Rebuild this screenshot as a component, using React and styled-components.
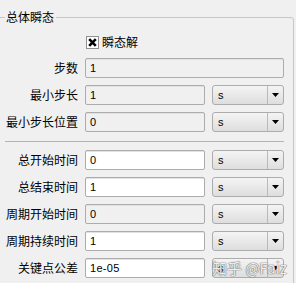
import React from "react";
import styled, { createGlobalStyle } from "styled-components";

const GlobalStyle = createGlobalStyle`
    body {
        margin: 0;
        background: #f0f0f0;
        font-family: "Noto Sans CJK SC", "Liberation Sans", sans-serif;
    }
`;

const Page = styled.div`
    height: 283px;
    overflow: hidden;
`;

const Frame = styled.fieldset`
    position: relative;
    margin: 10px 2px 0 -6px;
    padding: 0 9px 30px 11px;
    border: 1px solid #c6c6c6;
    border-radius: 3px;
    min-inline-size: 0;
`;

const Legend = styled.legend`
    margin-left: -1px;
    padding: 0 2px 0 1px;
    font-size: 12px;
    line-height: 14px;
    color: #000;
`;

const Form = styled.div`
    display: grid;
    grid-template-columns: 72px 120px 72px;
    column-gap: 7px;
    row-gap: 7px;
    padding-top: 9px;
`;

const Label = styled.label`
    font-size: 12px;
    line-height: 20px;
    height: 20px;
    text-align: right;
    white-space: nowrap;
    color: #000;
`;

const CheckRow = styled.div`
    grid-column: 2 / 4;
    height: 18px;
    display: flex;
    align-items: center;
    gap: 3px;
    margin-left: 1px;
`;

const CheckBox = styled.span`
    width: 11px;
    height: 11px;
    border: 1px solid #8f8f8f;
    background: #fff;
    display: flex;
    align-items: center;
    justify-content: center;
`;

const CheckText = styled.span`
    font-size: 12px;
    line-height: 14px;
`;

const Field = styled.div`
    grid-column: ${(p) => (p.$wide ? "2 / 4" : "2 / 3")};
    height: 20px;
    box-sizing: border-box;
    border: 1px solid #acacac;
    border-radius: 2px;
    background: ${(p) => (p.$readonly ? "#f0f0f0" : "#ffffff")};
    box-shadow: inset 0 1px 0 #e2e2e2;
    padding-left: 4px;
    font-family: "Liberation Sans", Arial, sans-serif;
    font-size: 11px;
    letter-spacing: 0.3px;
    line-height: 18px;
    color: #000;
`;

const Combo = styled.div`
    height: 20px;
    box-sizing: border-box;
    border: 1px solid #acacac;
    border-radius: 3px;
    background: linear-gradient(#f4f4f4, #dedede);
    display: flex;
`;

const ComboText = styled.span`
    flex: 1;
    padding-left: 5px;
    font-family: "Liberation Sans", Arial, sans-serif;
    font-size: 11px;
    line-height: 19px;
    color: #000;
`;

const ComboArrow = styled.span`
    width: 15px;
    border-left: 1px solid #b9b9b9;
    display: flex;
    align-items: center;
    justify-content: center;
`;

const Separator = styled.div`
    grid-column: 1 / 4;
    height: 1px;
    margin: 2px 0 1px -1px;
    background: #b4b4b4;
`;

const Watermark = styled.div`
    position: absolute;
    top: 234px;
    right: 6px;
    font-size: 15px;
    line-height: 20px;
    color: rgba(255, 255, 255, 0.9);
    text-shadow: 0 0 1px #777, 0 0 1px #777, 0 0 1px #777;
    white-space: nowrap;
`;

const Arrow = () => (
    <svg width="7" height="4" viewBox="0 0 7 4">
        <path d="M0 0 H7 L3.5 4 Z" fill="#000" />
    </svg>
);

const Unit = () => (
    <Combo>
        <ComboText>s</ComboText>
        <ComboArrow>
            <Arrow />
        </ComboArrow>
    </Combo>
);

const topRows = [
    { label: "最小步长", value: "1", readonly: true },
    { label: "最小步长位置", value: "0", readonly: true },
];

const timeRows = [
    { label: "总开始时间", value: "0" },
    { label: "总结束时间", value: "1" },
    { label: "周期开始时间", value: "0", readonly: true },
    { label: "周期持续时间", value: "1" },
    { label: "关键点公差", value: "1e-05" },
];

const Row = ({ item }) => (
    <>
        <Label>{item.label}</Label>
        <Field $readonly={item.readonly}>{item.value}</Field>
        <Unit />
    </>
);

export default function App() {
    return (
        <Page>
            <GlobalStyle />
            <Frame>
                <Legend>总体瞬态</Legend>
                <Form>
                    <CheckRow>
                        <CheckBox>
                            <svg width="9" height="9" viewBox="0 0 9 9">
                                <path d="M1.2 1.2 L7.8 7.8 M7.8 1.2 L1.2 7.8" stroke="#000" strokeWidth="2.6" />
                            </svg>
                        </CheckBox>
                        <CheckText>瞬态解</CheckText>
                    </CheckRow>
                    <Label>步数</Label>
                    <Field $wide $readonly>1</Field>
                    {topRows.map((item, i) => (
                        <Row key={i} item={item} />
                    ))}
                    <Separator />
                    {timeRows.map((item, i) => (
                        <Row key={i} item={item} />
                    ))}
                </Form>
                <Watermark>知乎 @Faiz</Watermark>
            </Frame>
        </Page>
    );
}
